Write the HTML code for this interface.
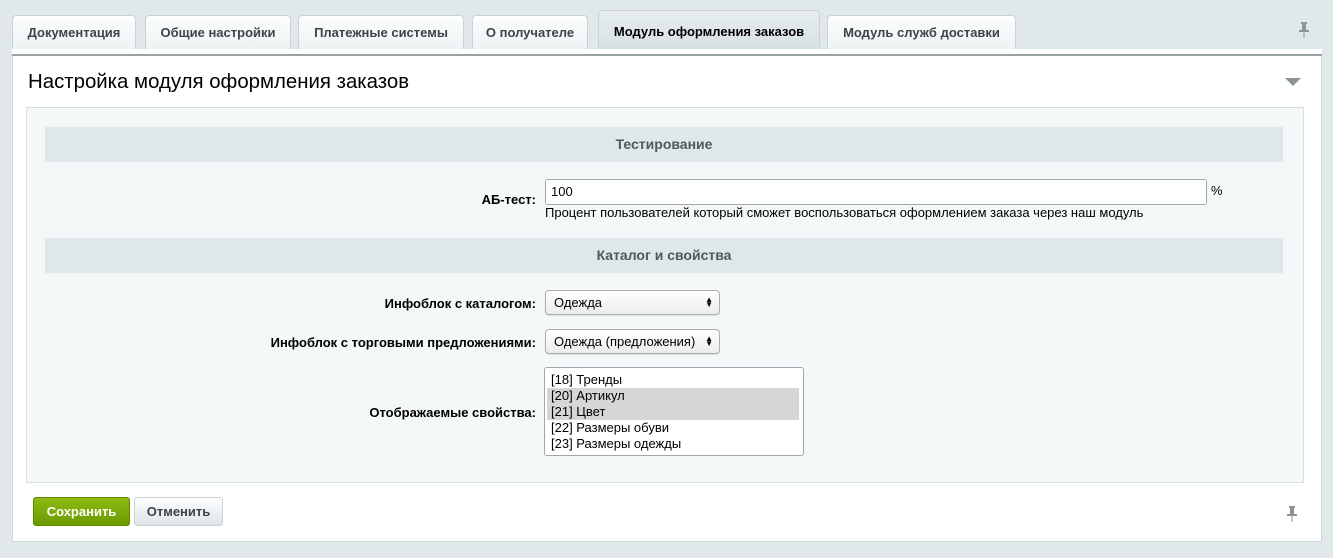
<!DOCTYPE html>
<html><head><meta charset="utf-8"><style>
*{box-sizing:border-box;margin:0;padding:0}
body{width:1333px;height:558px;background:#e1e8ea;font-family:"Liberation Sans",Arial,sans-serif;position:relative;overflow:hidden;color:#000}
.a{position:absolute}
.tab{position:absolute;top:15px;height:34px;border:1px solid #c9d2d5;border-bottom:none;border-radius:4px 4px 0 0;background:linear-gradient(#fdfefe,#eef2f3);font-size:13px;font-weight:bold;color:#3c4549;text-align:center;line-height:33px}
.tab.act{top:10px;height:39px;background:linear-gradient(#e8eef0,#d6e0e2);color:#000;line-height:42px}
.hdr{position:absolute;left:45px;width:1238px;height:35px;background:#dfe7e9;font-size:14px;font-weight:bold;color:#4b5a5f;text-align:center;line-height:35px}
.lbl{position:absolute;font-size:13px;font-weight:bold;text-align:right;right:797px}
.sel{position:absolute;left:545px;height:25px;border:1px solid #a8aeb0;border-radius:4px;background:linear-gradient(#fff,#ececec);font-size:13px;line-height:23px;padding-left:8px;box-shadow:0 1px 1px rgba(0,0,0,.1)}
.arr{position:absolute;right:6px;top:6px;font-size:8px;line-height:5px}
</style></head><body>
<div class="tab" style="left:12px;width:124px">Документация</div>
<div class="tab" style="left:145px;width:146px">Общие настройки</div>
<div class="tab" style="left:298px;width:166px">Платежные системы</div>
<div class="tab" style="left:472px;width:116px">О получателе</div>
<div class="tab act" style="left:598px;width:222px">Модуль оформления заказов</div>
<div class="tab" style="left:827px;width:189px">Модуль служб доставки</div>
<svg class="a" style="left:1298px;top:21px" width="12" height="18" viewBox="0 0 12 18"><rect x="3" y="1" width="6" height="2" fill="#8b9598"/><rect x="4" y="3" width="4" height="6" fill="#8b9598"/><rect x="1" y="9" width="10" height="2" fill="#8b9598"/><rect x="5.5" y="11" width="1" height="6" fill="#8b9598"/></svg>
<div class="a" style="left:12px;top:49px;width:1310px;height:7px;background:#fff;border-bottom:2px solid #99a3a6"></div>
<div class="a" style="left:12px;top:56px;width:1310px;height:486px;background:#fff;border:1px solid #cfd8db;border-top:none"></div>
<div class="a" style="left:28px;top:71px;font-size:20.4px;color:#000">Настройка модуля оформления заказов</div>
<svg class="a" style="left:1285px;top:78px" width="16" height="8"><polygon points="0,0 16,0 8,8" fill="#8b9598"/></svg>
<div class="a" style="left:26px;top:107px;width:1278px;height:376px;background:#f4f8f8;border:1px solid #d3dfe2"></div>
<div class="hdr" style="top:127px">Тестирование</div>
<div class="lbl" style="top:192px">АБ-тест:</div>
<div class="a" style="left:545px;top:179px;width:662px;height:26px;border:1px solid #a0a8ab;border-radius:3px;background:#fff;font-size:13px;line-height:24px;padding-left:5px">100</div>
<div class="a" style="left:1211px;top:183px;font-size:13px">%</div>
<div class="a" style="left:545px;top:205px;font-size:13px">Процент пользователей который сможет воспользоваться оформлением заказа через наш модуль</div>
<div class="hdr" style="top:238px">Каталог и свойства</div>
<div class="lbl" style="top:296px">Инфоблок с каталогом:</div>
<div class="sel" style="top:290px;width:175px">Одежда<span class="arr">▲<br>▼</span></div>
<div class="lbl" style="top:335px">Инфоблок с торговыми предложениями:</div>
<div class="sel" style="top:329px;width:175px">Одежда (предложения)<span class="arr">▲<br>▼</span></div>
<div class="lbl" style="top:405px">Отображаемые свойства:</div>
<div class="a" style="left:544px;top:367px;width:260px;height:89px;border:1px solid #a0a8ab;border-radius:3px;background:#fff;font-size:13px;line-height:16px;padding:4px 4px 0 2px">
<div style="padding-left:4px">[18] Тренды</div><div style="background:#d6d6d6;padding-left:4px">[20] Артикул</div><div style="background:#d6d6d6;padding-left:4px">[21] Цвет</div><div style="padding-left:4px">[22] Размеры обуви</div><div style="padding-left:4px">[23] Размеры одежды</div></div>
<div class="a" style="left:33px;top:497px;width:97px;height:29px;border-radius:3px;background:linear-gradient(#8dba12,#6b9a00);border:1px solid #5f8a00;color:#fff;font-size:13px;font-weight:bold;text-align:center;line-height:27px">Сохранить</div>
<div class="a" style="left:134px;top:497px;width:89px;height:29px;border-radius:3px;background:linear-gradient(#fff,#dde4e7);border:1px solid #ccd4d7;color:#3a4448;font-size:13px;font-weight:bold;text-align:center;line-height:27px">Отменить</div>
<svg class="a" style="left:1286px;top:505px" width="12" height="18" viewBox="0 0 12 18"><rect x="3" y="1" width="6" height="2" fill="#8b9598"/><rect x="4" y="3" width="4" height="6" fill="#8b9598"/><rect x="1" y="9" width="10" height="2" fill="#8b9598"/><rect x="5.5" y="11" width="1" height="6" fill="#8b9598"/></svg>
</body></html>
